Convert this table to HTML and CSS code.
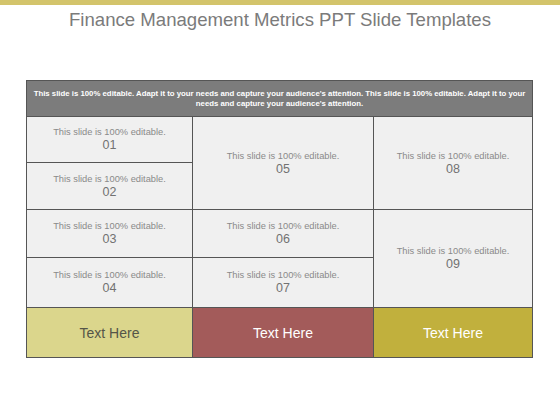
FILE: index.html
```html
<!DOCTYPE html>
<html>
<head>
<meta charset="utf-8">
<link rel="stylesheet" href="styles.css">
</head>
<body>
<div class="topbar"></div>
<h1 class="title">Finance Management Metrics PPT Slide Templates</h1>
<div class="table">
  <div class="head">This slide is 100% editable. Adapt it to your needs and capture your audience's attention. This slide is 100% editable. Adapt it to your<br>needs and capture your audience's attention.</div>
  <div class="cell c01"><span class="txt">This slide is 100% editable.</span><span class="num">01</span></div>
  <div class="cell c02"><span class="txt">This slide is 100% editable.</span><span class="num">02</span></div>
  <div class="cell c03"><span class="txt">This slide is 100% editable.</span><span class="num">03</span></div>
  <div class="cell c04"><span class="txt">This slide is 100% editable.</span><span class="num">04</span></div>
  <div class="cell c05"><span class="txt">This slide is 100% editable.</span><span class="num">05</span></div>
  <div class="cell c06"><span class="txt">This slide is 100% editable.</span><span class="num">06</span></div>
  <div class="cell c07"><span class="txt">This slide is 100% editable.</span><span class="num">07</span></div>
  <div class="cell c08"><span class="txt">This slide is 100% editable.</span><span class="num">08</span></div>
  <div class="cell c09"><span class="txt">This slide is 100% editable.</span><span class="num">09</span></div>
  <div class="foot f1">Text Here</div>
  <div class="foot f2">Text Here</div>
  <div class="foot f3">Text Here</div>
</div>
</body>
</html>
```
FILE: styles.css
```css
html, body {
  margin: 0;
  padding: 0;
  background: #ffffff;
  font-family: "Liberation Sans", Arial, sans-serif;
}
.topbar {
  height: 5px;
  background: #d3c46b;
}
.title {
  margin: 0;
  padding-top: 4px;
  height: 75px;
  box-sizing: border-box;
  text-align: center;
  font-size: 18.6px;
  font-weight: normal;
  line-height: 22px;
  color: #7b7b7b;
}
.table {
  margin-left: 26px;
  width: 507px;
  box-sizing: border-box;
  border: 1px solid #555555;
  background: #555555;
  display: grid;
  grid-template-columns: 165px 180px 158px;
  grid-template-rows: 35px 45px 46px 47px 49px 49px;
  gap: 1px;
  grid-template-areas:
    "h h h"
    "a e g"
    "b e g"
    "c f i"
    "d k i"
    "x y z";
}
.head {
  grid-area: h;
  background: #7c7c7c;
  color: #ffffff;
  font-size: 7.8px;
  font-weight: bold;
  line-height: 10px;
  text-align: center;
  white-space: nowrap;
  display: flex;
  align-items: center;
  justify-content: center;
}
.cell {
  background: #f0f0f0;
  display: flex;
  flex-direction: column;
  align-items: center;
  justify-content: center;
  text-align: center;
}
.txt {
  font-size: 9.3px;
  line-height: 12px;
  color: #8a8a8a;
}
.num {
  font-size: 12.5px;
  line-height: 15px;
  color: #727272;
}
.c01 { grid-area: a; }
.c02 { grid-area: b; }
.c03 { grid-area: c; }
.c04 { grid-area: d; }
.c05 { grid-area: e; }
.c06 { grid-area: f; }
.c07 { grid-area: k; }
.c08 { grid-area: g; }
.c09 { grid-area: i; }
.foot {
  display: flex;
  align-items: center;
  justify-content: center;
  font-size: 14px;
  color: #ffffff;
}
.f1 { grid-area: x; background: #dbd68c; color: #555548; }
.f2 { grid-area: y; background: #a35b5a; }
.f3 { grid-area: z; background: #c1b03d; }
```
